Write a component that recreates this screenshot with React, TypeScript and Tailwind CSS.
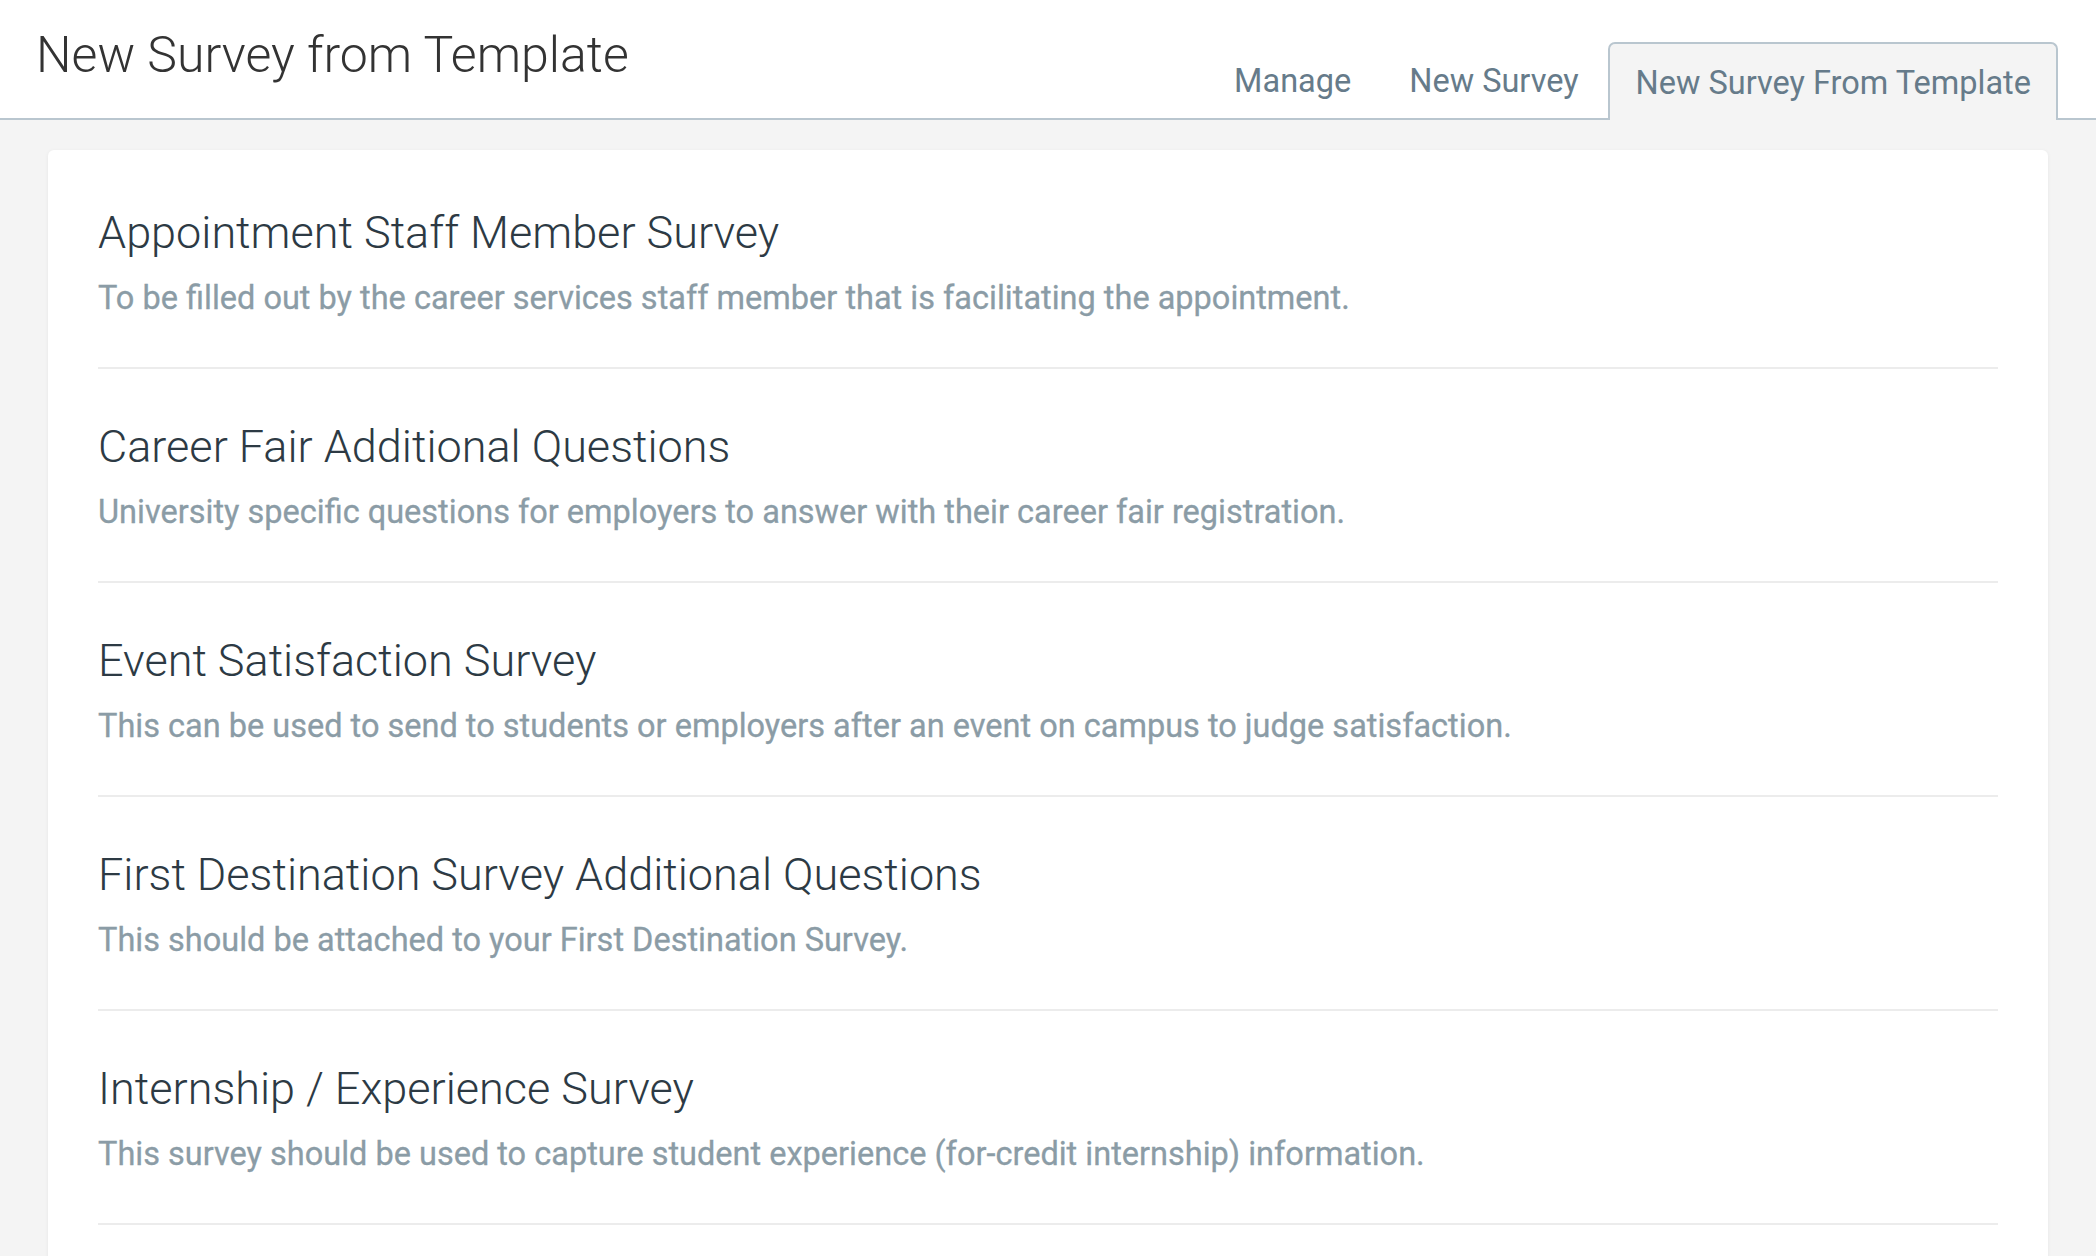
import React from "react";

const items = [
  {
    title: "Appointment Staff Member Survey",
    desc: "To be filled out by the career services staff member that is facilitating the appointment.",
  },
  {
    title: "Career Fair Additional Questions",
    desc: "University specific questions for employers to answer with their career fair registration.",
  },
  {
    title: "Event Satisfaction Survey",
    desc: "This can be used to send to students or employers after an event on campus to judge satisfaction.",
  },
  {
    title: "First Destination Survey Additional Questions",
    desc: "This should be attached to your First Destination Survey.",
  },
  {
    title: "Internship / Experience Survey",
    desc: "This survey should be used to capture student experience (for-credit internship) information.",
  },
];

export default function App() {
  return (
    <div
      className="h-[1256px] overflow-hidden bg-[#f4f4f4]"
      style={{ fontFamily: "Roboto, 'Liberation Sans', sans-serif" }}
    >
      <header className="flex h-[120px] items-stretch justify-between border-b-2 border-[#b9c6cf] bg-white pr-[38px]">
        <h1 className="pl-[36px] pt-[25px] text-[50px] font-light leading-[60px] text-[#333333]">
          New Survey from Template
        </h1>
        <nav className="flex items-end">
          <a className="border-2 border-transparent px-[27px] pt-[20px] pb-[16px] text-[32.5px] leading-[38px] text-[#667b8a]">
            Manage
          </a>
          <a className="border-2 border-transparent px-[27px] pt-[20px] pb-[16px] text-[32.5px] leading-[38px] text-[#667b8a]">
            New Survey
          </a>
          <a className="-mb-[2px] rounded-t-[7px] border-2 border-b-0 border-[#b9c6cf] bg-[#f4f4f4] pl-[26px] pr-[25px] pb-[18px] pt-[20px] text-[32.5px] leading-[38px] text-[#667b8a]">
            New Survey From Template
          </a>
        </nav>
      </header>
      <main className="px-[48px] pt-[30px]">
        <div className="rounded-[6px] bg-white px-[50px] pt-[5px] pb-[60px] shadow-[0_1px_4px_rgba(0,0,0,0.06)]">
          {items.map((it) => (
            <div key={it.title} className="border-b-2 border-[#ececec] pt-[50px] pb-[47px]">
              <h2 className="text-[45px] font-light leading-[55px] text-[#2d3a44]">{it.title}</h2>
              <p className="mt-[17px] text-[32.5px] leading-[43px] text-[#8b9ca6] [-webkit-text-stroke:0.3px_#8b9ca6]">
                {it.desc}
              </p>
            </div>
          ))}
        </div>
      </main>
    </div>
  );
}
